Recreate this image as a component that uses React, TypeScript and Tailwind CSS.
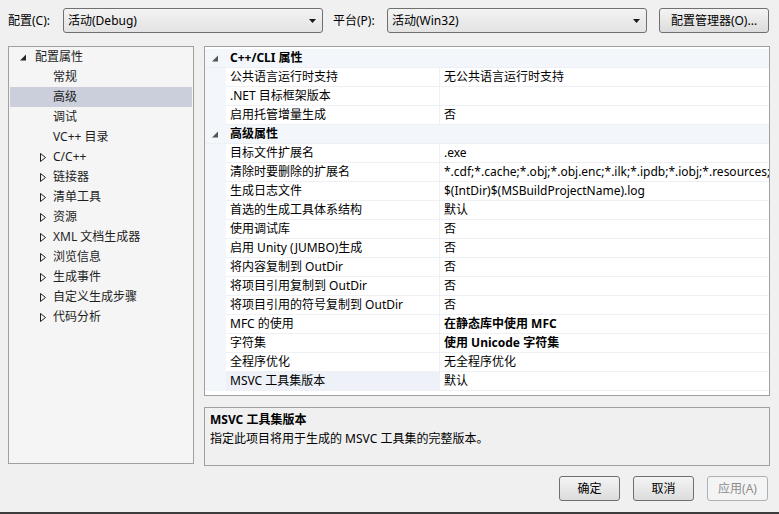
const font = { fontFamily: '"Noto Sans", "Noto Sans CJK SC", sans-serif' };

const treeItems: { label: string; level: 0 | 1 | 2; selected?: boolean }[] = [
  { label: '配置属性', level: 0 },
  { label: '常规', level: 1 },
  { label: '高级', level: 1, selected: true },
  { label: '调试', level: 1 },
  { label: 'VC++ 目录', level: 1 },
  { label: 'C/C++', level: 2 },
  { label: '链接器', level: 2 },
  { label: '清单工具', level: 2 },
  { label: '资源', level: 2 },
  { label: 'XML 文档生成器', level: 2 },
  { label: '浏览信息', level: 2 },
  { label: '生成事件', level: 2 },
  { label: '自定义生成步骤', level: 2 },
  { label: '代码分析', level: 2 },
];

type Row = { header?: boolean; name: string; value?: string; bold?: boolean; selected?: boolean };

const rows: Row[] = [
  { header: true, name: 'C++/CLI 属性' },
  { name: '公共语言运行时支持', value: '无公共语言运行时支持' },
  { name: '.NET 目标框架版本', value: '' },
  { name: '启用托管增量生成', value: '否' },
  { header: true, name: '高级属性' },
  { name: '目标文件扩展名', value: '.exe' },
  { name: '清除时要删除的扩展名', value: '*.cdf;*.cache;*.obj;*.obj.enc;*.ilk;*.ipdb;*.iobj;*.resources;*.tlb;*.tli;*.tlh;*.tmp' },
  { name: '生成日志文件', value: '$(IntDir)$(MSBuildProjectName).log' },
  { name: '首选的生成工具体系结构', value: '默认' },
  { name: '使用调试库', value: '否' },
  { name: '启用 Unity (JUMBO)生成', value: '否' },
  { name: '将内容复制到 OutDir', value: '否' },
  { name: '将项目引用复制到 OutDir', value: '否' },
  { name: '将项目引用的符号复制到 OutDir', value: '否' },
  { name: 'MFC 的使用', value: '在静态库中使用 MFC', bold: true },
  { name: '字符集', value: '使用 Unicode 字符集', bold: true },
  { name: '全程序优化', value: '无全程序优化' },
  { name: 'MSVC 工具集版本', value: '默认', selected: true },
];

function Combo({ text, width }: { text: string; width: string }) {
  return (
    <div
      className={`${width} h-[25px] flex items-center justify-between rounded-[3px] border border-[#707070] bg-gradient-to-b from-[#f3f3f3] to-[#e3e3e3] pl-[4px] pr-[6px] text-[12px] text-black`}
    >
      <span>{text}</span>
      <svg width="7" height="4" viewBox="0 0 7 4">
        <path d="M0 0h7L3.5 4z" fill="#1a1a1a" />
      </svg>
    </div>
  );
}

function Button({ text, width, disabled }: { text: string; width: string; disabled?: boolean }) {
  return (
    <div
      className={`${width} h-[25px] flex items-center justify-center rounded-[3px] border text-[12px] ${
        disabled
          ? 'border-[#adb2b5] bg-[#f4f4f4] text-[#8d8d8d]'
          : 'border-[#707070] bg-gradient-to-b from-[#f4f4f4] to-[#dcdcdc] text-black'
      }`}
    >
      {text}
    </div>
  );
}

function ExpandedArrow({ color }: { color: string }) {
  return (
    <svg width="7" height="7" viewBox="0 0 7 7">
      <path d="M6 0.5V6.5H0z" fill={color} />
    </svg>
  );
}

function CollapsedArrow() {
  return (
    <svg width="6" height="9" viewBox="0 0 6 9">
      <path d="M0.5 0.5L5.5 4.5L0.5 8.5z" fill="none" stroke="#1e1e1e" strokeWidth="1" />
    </svg>
  );
}

export default function App() {
  return (
    <div className="relative w-[779px] h-[514px] overflow-hidden bg-[#f0f0f0] text-[12px] text-black" style={font}>
      <div className="flex items-center h-[25px] mt-[8px] pl-[8px]">
        <span className="w-[55px]">配置(C):</span>
        <Combo text="活动(Debug)" width="w-[260px]" />
        <span className="ml-[10px] w-[54px]">平台(P):</span>
        <Combo text="活动(Win32)" width="w-[260px]" />
        <div className="ml-[12px]">
          <Button text="配置管理器(O)..." width="w-[110px]" />
        </div>
      </div>

      <div className="flex mt-[13px] pl-[8px]">
        <div className="w-[186px] h-[418px] border border-[#a0a0a0] bg-[#f5f5f5] px-[1px]">
          {treeItems.map((it) => (
            <div
              key={it.label}
              className={`flex items-center h-[20px] text-[#1e1e1e] ${it.selected ? 'bg-[#cbcfdc]' : ''}`}
            >
              {it.level === 0 && (
                <>
                  <span className="ml-[10px] w-[15px] flex"><ExpandedArrow color="#262626" /></span>
                  <span>{it.label}</span>
                </>
              )}
              {it.level === 1 && <span className="ml-[43px]">{it.label}</span>}
              {it.level === 2 && (
                <>
                  <span className="ml-[30px] w-[13px] flex"><CollapsedArrow /></span>
                  <span>{it.label}</span>
                </>
              )}
            </div>
          ))}
        </div>

        <div className="ml-[10px] w-[566px] flex flex-col">
          <div className="h-[350px] border border-[#a0a0a0] bg-white pt-[2px] overflow-hidden">
            {rows.map((r) =>
              r.header ? (
                <div key={r.name} className="flex items-center h-[19px] bg-[#f3f6fb] border-b border-[#eceff4]">
                  <span className="ml-[7px] w-[18px] flex"><ExpandedArrow color="#555555" /></span>
                  <span className="font-bold">{r.name}</span>
                </div>
              ) : (
                <div key={r.name} className="flex h-[19px]">
                  <div className="w-[21px] shrink-0 bg-[#f3f6fb]" />
                  <div
                    className={`w-[214px] shrink-0 flex items-center pl-[4px] border-b border-r border-[#eef0f4] ${
                      r.selected ? 'bg-[#eef2f8]' : ''
                    }`}
                  >
                    {r.name}
                  </div>
                  <div
                    className={`flex-1 min-w-0 flex items-center pl-[4px] whitespace-nowrap overflow-hidden border-b border-[#eef0f4] ${
                      r.bold ? 'font-bold' : ''
                    }`}
                  >
                    {r.value}
                  </div>
                </div>
              )
            )}
          </div>

          <div className="mt-[11px] h-[59px] border border-[#a0a0a0] bg-[#f0f0f0] px-[5px] pt-[2px] leading-[19px]">
            <div className="font-bold">MSVC 工具集版本</div>
            <div>指定此项目将用于生成的 MSVC 工具集的完整版本。</div>
          </div>
        </div>
      </div>

      <div className="flex justify-end gap-[13px] mt-[10px] pr-[11px]">
        <Button text="确定" width="w-[61px]" />
        <Button text="取消" width="w-[61px]" />
        <Button text="应用(A)" width="w-[61px]" disabled />
      </div>

      <div className="absolute left-0 right-0 bottom-0 h-[2px] bg-[#3c3c3c]" />
    </div>
  );
}
